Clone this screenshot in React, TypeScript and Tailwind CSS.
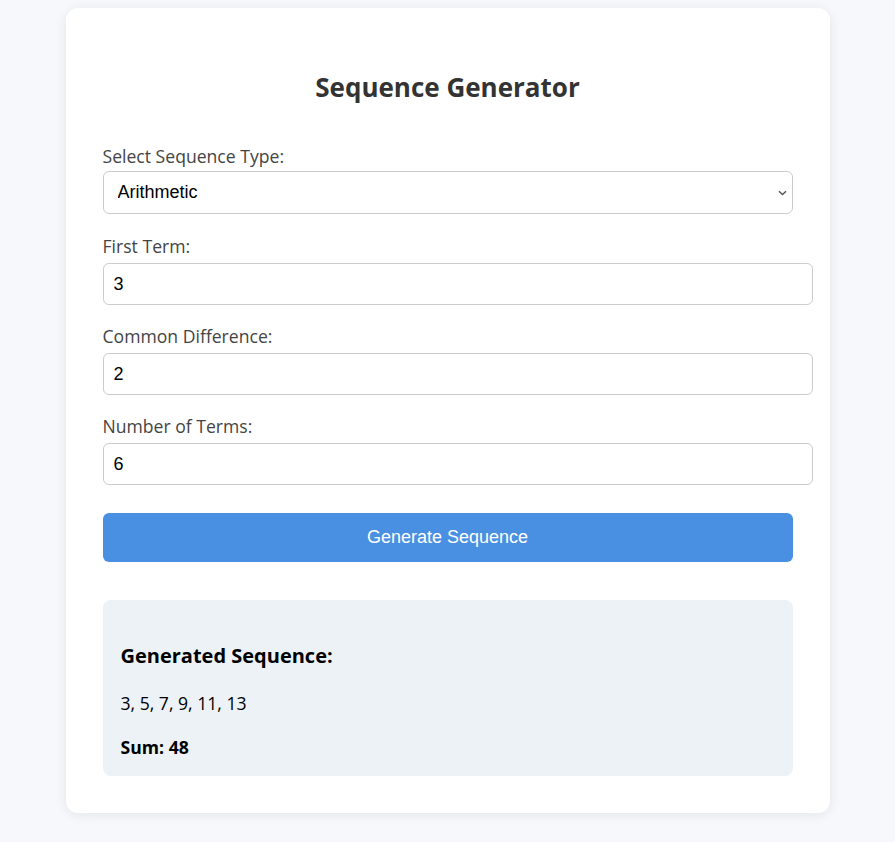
import React, { useState } from 'react';

type SeqType = 'arithmetic' | 'geometric';

const uiFont = "font-['Open_Sans','Noto_Sans',sans-serif]";
const fieldFont = "font-['Liberation_Sans',Arial,sans-serif]";

const App: React.FC = () => {
  const [type, setType] = useState<SeqType>('arithmetic');
  const [first, setFirst] = useState('3');
  const [diff, setDiff] = useState('2');
  const [count, setCount] = useState('6');

  const build = (): number[] => {
    const a = Number(first);
    const d = Number(diff);
    const n = Math.max(0, Math.floor(Number(count)));
    const out: number[] = [];
    for (let i = 0; i < n; i++) {
      out.push(type === 'arithmetic' ? a + d * i : a * Math.pow(d, i));
    }
    return out;
  };

  const [terms, setTerms] = useState<number[]>(build);
  const sum = terms.reduce((s, v) => s + v, 0);

  const labelCls = 'block text-[17.6px] leading-[24px] text-[#444] mt-[19px] mb-[5px]';
  const inputCls = `block w-[710px] h-[42px] px-[10px] border border-[#ccc] rounded-[6px] text-[18px] text-black bg-white outline-none ${fieldFont}`;

  return (
    <div className={`min-h-[842px] bg-[#f6f8fc] pt-2 ${uiFont}`}>
      <div className="w-[764px] mx-auto bg-white rounded-[12px] shadow-[0_2px_12px_rgba(0,0,0,0.08)] px-[37px] pt-[64px] pb-[37px]">
        <h1 className="text-[26px] leading-[31px] font-bold text-[#333] text-center mb-[41px]">Sequence Generator</h1>

        <label className="block text-[17.6px] leading-[24px] text-[#444] mb-[3px]">Select Sequence Type:</label>
        <div className="relative">
          <select
            value={type}
            onChange={(e) => setType(e.target.value as SeqType)}
            className={`block w-full h-[43px] pl-[14px] pr-[30px] border border-[#ccc] rounded-[6px] text-[18px] text-black bg-white appearance-none outline-none ${fieldFont}`}
          >
            <option value="arithmetic">Arithmetic</option>
            <option value="geometric">Geometric</option>
          </select>
          <svg
            className="absolute right-[6px] top-[19px] pointer-events-none"
            width="9"
            height="6"
            viewBox="0 0 9 6"
            fill="none"
          >
            <path d="M1 1.2 L4.5 4.6 L8 1.2" stroke="#555" strokeWidth="1.4" />
          </svg>
        </div>

        <label className={`${labelCls} !mt-[20px]`}>First Term:</label>
        <input className={inputCls} type="number" value={first} onChange={(e) => setFirst(e.target.value)} />

        <label className={labelCls}>{type === 'arithmetic' ? 'Common Difference:' : 'Common Ratio:'}</label>
        <input className={inputCls} type="number" value={diff} onChange={(e) => setDiff(e.target.value)} />

        <label className={labelCls}>Number of Terms:</label>
        <input className={inputCls} type="number" value={count} onChange={(e) => setCount(e.target.value)} />

        <button
          onClick={() => setTerms(build())}
          className={`block w-full h-[49px] mt-[28px] rounded-[6px] bg-[#4a90e2] text-white text-[18px] ${fieldFont}`}
        >
          Generate Sequence
        </button>

        {/* Result panel */}
        <div className="mt-[38px] bg-[#edf2f7] rounded-[8px] px-[18px] pt-[41px] pb-[17px] text-black">
          <h3 className="text-[20px] leading-[30px] font-bold">Generated Sequence:</h3>
          <p className="text-[17.6px] leading-[24px] mt-[20px]">{terms.join(', ')}</p>
          <p className="text-[17.6px] leading-[24px] font-bold mt-[20px]">Sum: {sum}</p>
        </div>
      </div>
    </div>
  );
};

export default App;
